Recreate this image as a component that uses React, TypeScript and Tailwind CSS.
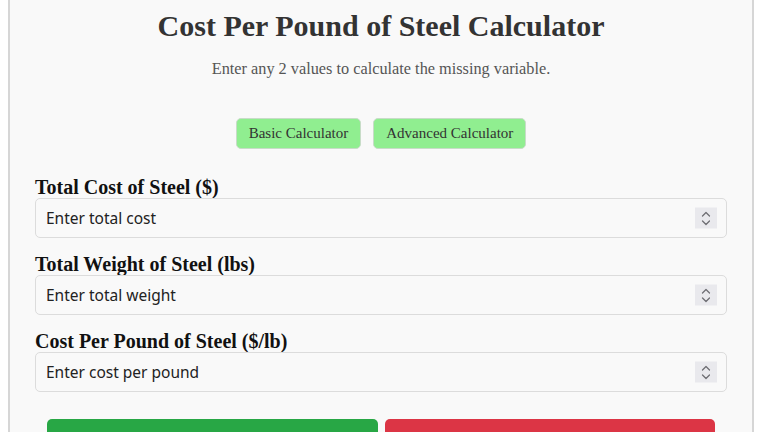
import React from 'react';

const serif = { fontFamily: '"Liberation Serif", "Times New Roman", serif' };

interface FieldProps {
  label: string;
  placeholder: string;
}

const Spinner = () => (
  <div className="pointer-events-none absolute right-[10px] top-1/2 flex h-[21px] w-[22px] -translate-y-1/2 flex-col items-center justify-center bg-[#e9e9ed]">
    <svg width="10" height="16" viewBox="0 0 10 16" fill="none" stroke="#6f6f74" strokeWidth="1.3" strokeLinecap="round" strokeLinejoin="round">
      <path d="M1.5 5.5 L5 2 L8.5 5.5" />
      <path d="M1.5 10.5 L5 14 L8.5 10.5" />
    </svg>
  </div>
);

const Field = ({ label, placeholder }: FieldProps) => (
  <div className="flex flex-col">
    <label className="mb-[1px] text-[20px] font-bold leading-[20px] text-[#111]" style={serif}>
      {label}
    </label>
    <div className="relative">
      <input
        type="text"
        placeholder={placeholder}
        className="h-[40px] w-full rounded-[5px] border border-[#dcdcdc] bg-[#f9f9f9] pl-[10px] pr-[40px] text-[15.5px] text-[#222] outline-none placeholder:text-[#222]"
        style={{ fontFamily: '"Noto Sans", "Open Sans", sans-serif' }}
      />
      <Spinner />
    </div>
  </div>
);

export default function App() {
  return (
    <div className="h-[432px] w-[768px] overflow-hidden bg-white">
      <div className="ml-[8px] h-full w-[746px] border-x-2 border-[#d6d6d6] bg-[#f9f9f9] px-[25px]">
        <h1 className="pt-[9px] text-center text-[30px] font-bold leading-[33px] text-[#333]" style={serif}>
          Cost Per Pound of Steel Calculator
        </h1>
        <p className="mt-[18px] text-center text-[16.3px] leading-[18px] text-[#555]" style={serif}>
          Enter any 2 values to calculate the missing variable.
        </p>

        <div className="mt-[40px] flex justify-center gap-[12px]">
          <button className="h-[31px] rounded-[5px] border border-[#c8dcc8] bg-[#90ee90] px-[12px] text-[15px] text-[#333]" style={serif}>
            Basic Calculator
          </button>
          <button className="h-[31px] rounded-[5px] border border-[#c8dcc8] bg-[#90ee90] px-[12px] text-[15px] text-[#333]" style={serif}>
            Advanced Calculator
          </button>
        </div>

        <div className="mt-[28px] flex flex-col gap-[16px]">
          <Field label="Total Cost of Steel ($)" placeholder="Enter total cost" />
          <Field label="Total Weight of Steel (lbs)" placeholder="Enter total weight" />
          <Field label="Cost Per Pound of Steel ($/lb)" placeholder="Enter cost per pound" />
        </div>

        <div className="mt-[27px] flex gap-[7px] px-[12px]">
          <button aria-label="Calculate" className="h-[48px] flex-1 rounded-[5px] bg-[#28a745]" />
          <button aria-label="Reset" className="h-[48px] flex-1 rounded-[5px] bg-[#dc3545]" />
        </div>
      </div>
    </div>
  );
}
